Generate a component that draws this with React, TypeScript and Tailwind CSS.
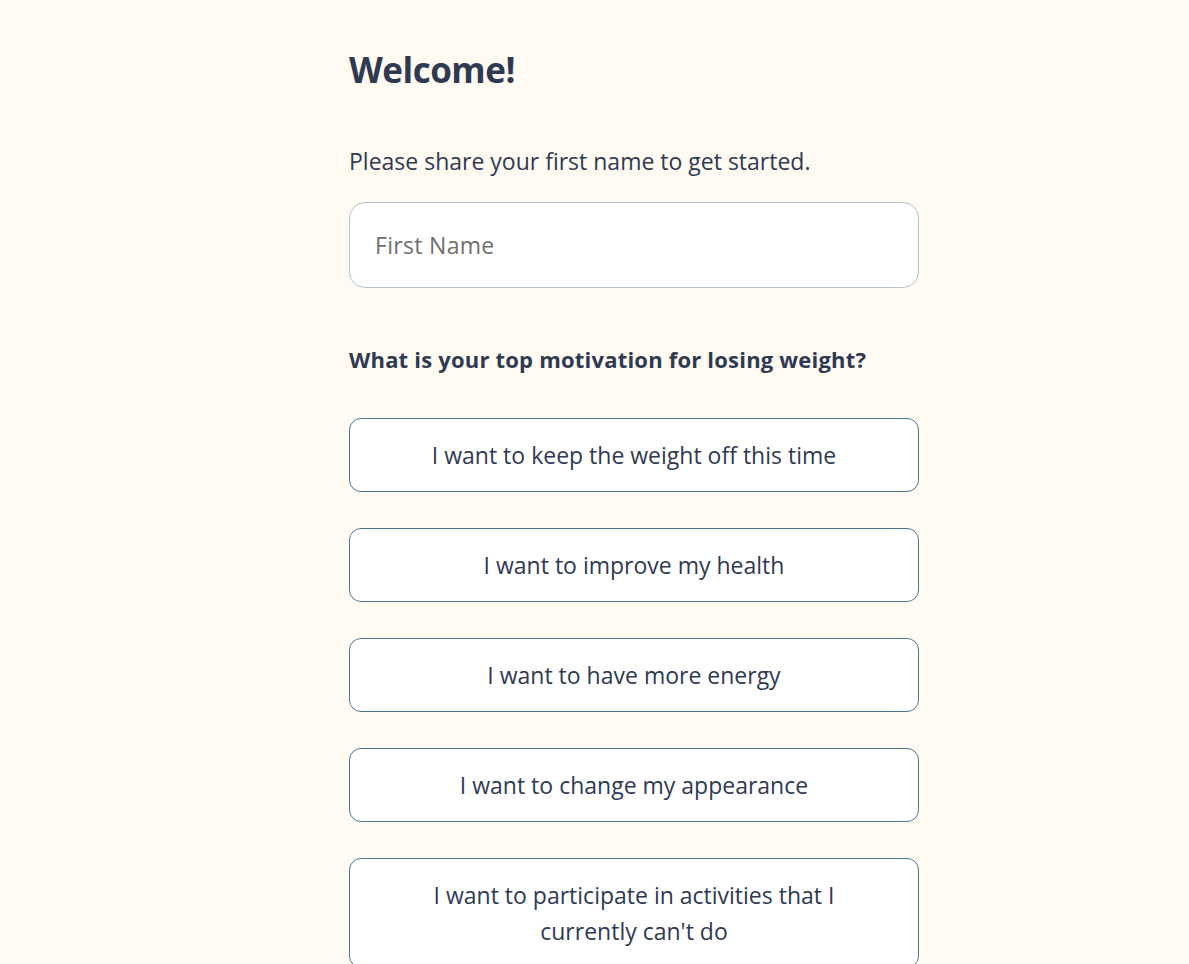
import { useState } from 'react'

const motivations = [
  'I want to keep the weight off this time',
  'I want to improve my health',
  'I want to have more energy',
  'I want to change my appearance',
  "I want to participate in activities that I currently can't do",
]

export default function App() {
  const [name, setName] = useState('')
  const [selected, setSelected] = useState<number | null>(null)

  return (
    <div
      className="min-h-screen bg-[#fffaf2] text-[#2f3a52]"
      style={{ fontFamily: '"Open Sans", "Noto Sans", sans-serif' }}
    >
      <div className="ml-[349px] w-[570px] pt-[46px] pb-10">
        <h1 className="text-[35px] font-bold leading-[48px] tracking-[-0.5px]">Welcome!</h1>

        <p className="mt-[52px] text-[23px] leading-[30px]">Please share your first name to get started.</p>

        <input
          type="text"
          value={name}
          onChange={(e) => setName(e.target.value)}
          placeholder="First Name"
          className="mt-[26px] h-[86px] w-full rounded-[16px] border border-[#b4c2cf] bg-white px-[25px] text-[23px] tracking-[0.3px] placeholder:text-[#6f6f6f] focus:outline-none"
        />

        <h2 className="mt-[56px] text-[22px] font-bold leading-[30px] tracking-[0.2px]">What is your top motivation for losing weight?</h2>

        {/* Answer options */}
        <div className="mt-[44px] flex flex-col gap-[36px]">
          {motivations.map((m, idx) => (
            <button
              key={idx}
              onClick={() => setSelected(idx)}
              className={
                'min-h-[74px] w-full rounded-[12px] border border-[#4c7592] px-[70px] py-[18px] text-center text-[23px] leading-[36px] ' +
                (selected === idx ? 'bg-[#e8f0f5]' : 'bg-white')
              }
            >
              {m}
            </button>
          ))}
        </div>
      </div>
    </div>
  )
}
